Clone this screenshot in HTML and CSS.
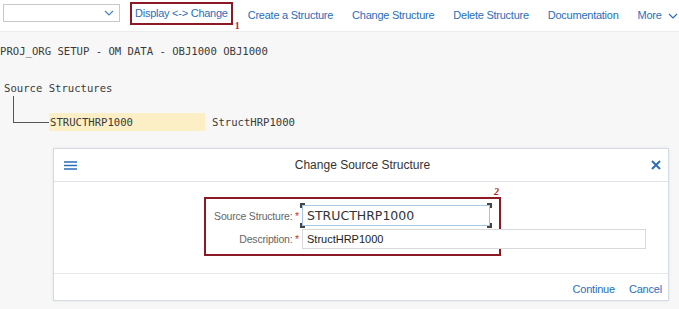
FILE: index.html
```html
<!DOCTYPE html>
<html lang="en">
<head>
    <meta charset="UTF-8">
    <title>Change Source Structure</title>
    <link rel="stylesheet" href="styles.css">
</head>
<body>

<!-- Toolbar -->
<div class="toolbar">
    <div class="select">
        <svg class="chevron" width="10" height="6" viewBox="0 0 10 6"><path d="M1 1 L5 5 L9 1" fill="none" stroke="#4a80c0" stroke-width="1.2"/></svg>
    </div>
    <span class="action marked">Display &lt;-&gt; Change<span class="step step-1">1</span></span>
    <span class="action first">Create a Structure</span>
    <span class="action">Change Structure</span>
    <span class="action">Delete Structure</span>
    <span class="action">Documentation</span>
    <span class="action more">More
        <svg width="10" height="6" viewBox="0 0 10 6"><path d="M1 1 L5 5 L9 1" fill="none" stroke="#2a6ebb" stroke-width="1.2"/></svg>
    </span>
</div>

<!-- Tree -->
<div class="content">
    <div class="mono heading">PROJ_ORG SETUP - OM DATA - OBJ1000 OBJ1000</div>
    <div class="mono root">Source Structures</div>
    <div class="tree-row">
        <div class="branch"></div>
        <div class="mono node-key">STRUCTHRP1000</div>
        <div class="mono node-text">StructHRP1000</div>
    </div>

    <!-- Dialog -->
    <div class="dialog">
        <div class="dialog-header">
            <svg class="menu" width="13" height="9" viewBox="0 0 13 9"><path d="M0 1H13M0 4.5H13M0 8H13" stroke="#2a6ebb" stroke-width="1.6"/></svg>
            <span class="dialog-title">Change Source Structure</span>
            <svg class="close" width="10" height="10" viewBox="0 0 10 10"><path d="M1 1L9 9M9 1L1 9" stroke="#2a6ebb" stroke-width="2"/></svg>
        </div>
        <div class="dialog-body">
            <div class="form marked">
                <span class="step step-2">2</span>
                <div class="field">
                    <label>Source Structure: <span class="req">*</span></label>
                    <div class="input focused key-input">STRUCTHRP1000
                        <i class="corner tl"></i><i class="corner tr"></i><i class="corner bl"></i><i class="corner br"></i>
                    </div>
                </div>
                <div class="field">
                    <label>Description: <span class="req">*</span></label>
                    <div class="input wide">StructHRP1000</div>
                </div>
            </div>
        </div>
        <div class="dialog-footer">
            <span class="action">Continue</span>
            <span class="action">Cancel</span>
        </div>
    </div>
</div>

</body>
</html>
```

FILE: styles.css
```css
* {
    margin: 0;
    padding: 0;
    box-sizing: border-box;
}
body {
    width: 679px;
    height: 309px;
    overflow: hidden;
    background-color: #f7f7f7;
    font-family: 'Liberation Sans', Arial, sans-serif;
    color: #333;
}
.toolbar {
    height: 32px;
    background-color: #fff;
    border-bottom: 1px solid #ececec;
    display: flex;
    align-items: center;
    font-size: 11px;
    letter-spacing: -0.25px;
}
.select {
    flex-shrink: 0;
    width: 117px;
    height: 18px;
    margin-left: 3px;
    margin-top: -5px;
    border: 1px solid #c8c8c8;
    background: #fff;
    position: relative;
}
.chevron {
    position: absolute;
    right: 5px;
    top: 5px;
}
.action {
    color: #2a6ebb;
    white-space: nowrap;
}
.toolbar .action {
    margin-left: 19px;
    margin-top: -2px;
}
.toolbar .marked {
    margin-left: 10px;
    padding: 3px 3px 4px 3px;
    margin-top: -5px;
}
.toolbar .first {
    margin-left: 15px;
}
.marked {
    border: 2px solid #8b1a24;
    position: relative;
}
.step {
    position: absolute;
    color: #b3262f;
    font-family: 'Liberation Serif', serif;
    font-weight: bold;
    font-size: 10px;
    letter-spacing: 0;
}
.step-1 {
    right: -9px;
    bottom: -8px;
}
.step-2 {
    right: 0px;
    top: -13px;
    font-style: italic;
}
.more svg {
    margin-left: 4px;
    vertical-align: middle;
}
.content {
    padding-top: 11px;
}
.mono {
    font-family: 'DejaVu Sans Mono', 'Liberation Mono', monospace;
    font-size: 10.6px;
    color: #3a3a3a;
}
.heading {
    height: 14px;
    line-height: 14px;
    margin-top: 1px;
}
.root {
    margin-top: 23px;
    margin-left: 4px;
    height: 14px;
    line-height: 14px;
}
.tree-row {
    display: flex;
    align-items: flex-end;
    margin-left: 13px;
    height: 36px;
}
.branch {
    width: 36px;
    height: 27px;
    border-left: 1px solid #555;
    border-bottom: 1px solid #555;
    margin-bottom: 8px;
}
.node-key {
    width: 156px;
    height: 18px;
    line-height: 18px;
    padding-left: 1px;
    background-color: #fcefc5;
}
.node-text {
    margin-left: 7px;
    height: 18px;
    line-height: 18px;
}
.dialog {
    margin-top: 17px;
    margin-left: 53px;
    width: 616px;
    height: 153px;
    background: #fff;
    border: 1px solid #d5dbe3;
    box-shadow: 0 0 3px rgba(0, 0, 0, 0.08);
    display: flex;
    flex-direction: column;
}
.dialog-header {
    height: 33px;
    border-bottom: 1px solid #dfe4ea;
    display: flex;
    align-items: center;
    padding: 0 7px 0 10px;
}
.dialog-title {
    flex: 1;
    text-align: center;
    font-size: 12px;
    color: #333;
    margin-left: -3px;
}
.dialog-body {
    height: 91px;
    padding-top: 15px;
    padding-left: 150px;
}
.form {
    width: 297px;
    height: 59px;
    padding-top: 6px;
}
.field {
    display: flex;
    align-items: center;
    margin-bottom: 3px;
}
.field label {
    flex-shrink: 0;
    width: 96px;
    text-align: right;
    font-size: 10.5px;
    letter-spacing: -0.2px;
    color: #666;
    white-space: nowrap;
    padding-right: 3px;
}
.req {
    color: #c0392b;
}
.input {
    flex-shrink: 0;
    height: 21px;
    line-height: 19px;
    border: 1px solid #d9d9d9;
    padding-left: 4px;
    font-size: 11px;
    color: #222;
    background: #fff;
    position: relative;
}
.focused {
    width: 188px;
    border-color: #a8c7e6;
}
.key-input {
    font-family: 'DejaVu Sans', Verdana, sans-serif;
    font-size: 12.5px;
    color: #333;
}
.wide {
    width: 344px;
    height: 20px;
}
.corner {
    position: absolute;
    width: 5px;
    height: 5px;
    border-color: #444;
    border-style: solid;
}
.tl { left: -3px; top: -3px; border-width: 2px 0 0 2px; }
.tr { right: -3px; top: -3px; border-width: 2px 2px 0 0; }
.bl { left: -3px; bottom: -3px; border-width: 0 0 2px 2px; }
.br { right: -3px; bottom: -3px; border-width: 0 2px 2px 0; }
.dialog-footer {
    flex: 1;
    border-top: 1px solid #e5e8ec;
    display: flex;
    justify-content: flex-end;
    align-items: center;
    gap: 14px;
    padding-right: 6px;
    padding-top: 3px;
    font-size: 11px;
    letter-spacing: -0.2px;
}
```
